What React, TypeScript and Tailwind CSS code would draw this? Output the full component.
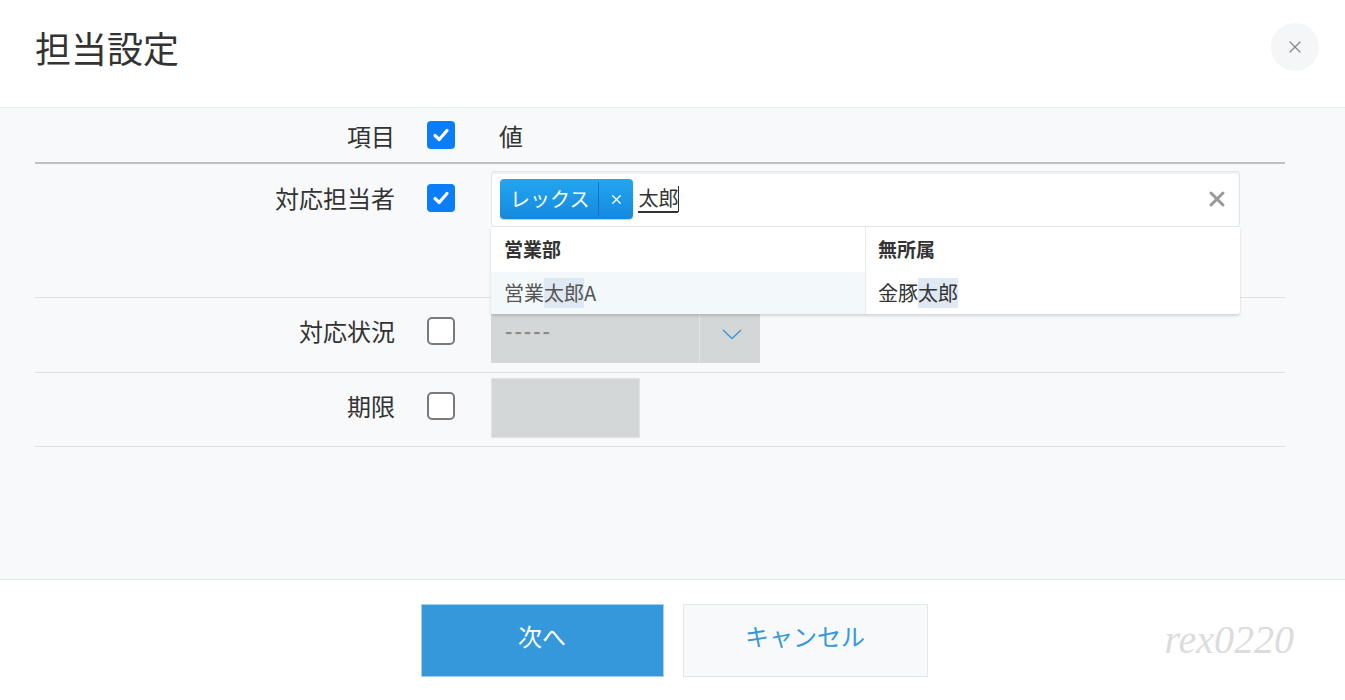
import { X } from "lucide-react";

const FONT = { fontFamily: '"Noto Sans CJK JP", "Noto Sans", sans-serif' };

function CheckBox({ checked }: { checked: boolean }) {
  if (checked) {
    return (
      <div className="flex h-[28px] w-[28px] items-center justify-center rounded-[4px] bg-[#0a7ef8]">
        <svg width="20" height="20" viewBox="0 0 20 20">
          <path d="M4 10.5 L8.2 14.5 L16 5.5" fill="none" stroke="#fff" strokeWidth="3.2" strokeLinecap="round" strokeLinejoin="round" />
        </svg>
      </div>
    );
  }
  return <div className="h-[28px] w-[28px] rounded-[5px] border-2 border-[#7a7a7a] bg-white" />;
}

function Hl({ children }: { children: string }) {
  return <span className="bg-[#dfe9f3]">{children}</span>;
}

export default function App() {
  return (
    <div className="flex h-[700px] w-[1345px] flex-col bg-white text-[#333]" style={FONT}>
      <div className="flex h-[108px] shrink-0 items-center justify-between border-b border-[#eceeef] pl-[35px] pr-[26px]">
        <h1 className="pb-[14px] text-[36px] font-normal leading-none text-[#333]">担当設定</h1>
        <button className="mb-[14px] flex h-[48px] w-[48px] items-center justify-center rounded-full bg-[#f5f6f7] text-[#888]">
          <X size={20} strokeWidth={1.5} />
        </button>
      </div>

      <div className="flex-1 bg-[#f7f9fa] pl-[35px] pr-[60px]">
        <div className="flex h-[56px] items-center border-b-2 border-[#c2c2c2]">
          <div className="w-[360px] pt-[2px] text-right text-[24px] leading-[30px]">項目</div>
          <div className="w-[96px] pl-[32px]">
            <CheckBox checked />
          </div>
          <div className="pl-[8px] pt-[2px] text-[24px] leading-[30px]">値</div>
        </div>

        <div className="flex h-[134px] items-start border-b border-[#e0e2e3]">
          <div className="mt-[19px] w-[360px] text-right text-[24px] leading-[30px]">対応担当者</div>
          <div className="mt-[20px] w-[96px] pl-[32px]">
            <CheckBox checked />
          </div>
          <div className="relative mt-[7px] w-[749px]">
            <div className="flex h-[56px] items-center rounded-[3px] border border-[#e3e6e8] bg-white pl-[8px] pr-[10px] shadow-[inset_0_2px_2px_rgba(0,0,0,0.06)]">
              <div className="flex h-[40px] items-center rounded-[4px] bg-gradient-to-b from-[#23a6ef] to-[#1589e0] text-white shadow-[0_1px_1px_rgba(0,0,0,0.2)]">
                <span className="pl-[10px] pr-[9px] text-[20px]">レックス</span>
                <span className="h-[34px] w-px bg-[#1274bf]" />
                <span className="flex w-[34px] justify-center">
                  <X size={15} strokeWidth={2} />
                </span>
              </div>
              <span className="ml-[5px] border-b-2 border-[#333] text-[20px] leading-[26px]">太郎</span>
              <span className="h-[26px] w-px bg-[#333]" />
              <span className="flex-1" />
              <X size={24} strokeWidth={3} className="text-[#9a9a9a]" />
            </div>

            <div className="absolute left-0 top-[56px] z-10 flex h-[87px] w-[749px] rounded-b-[3px] bg-white shadow-[0_2px_3px_rgba(0,0,0,0.15)]">
              <div className="flex w-[375px] flex-col border-r border-[#e8eaeb]">
                <div className="flex h-[45px] items-center pl-[13px] text-[19px] font-bold">営業部</div>
                <div className="flex h-[42px] items-center bg-[#f3f8fb] pl-[13px] text-[20px] text-[#555]">
                  営業<Hl>太郎</Hl>A
                </div>
              </div>
              <div className="flex flex-1 flex-col">
                <div className="flex h-[45px] items-center pl-[12px] text-[19px] font-bold">無所属</div>
                <div className="flex h-[42px] items-center pl-[12px] text-[20px]">
                  金豚<Hl>太郎</Hl>
                </div>
              </div>
            </div>
          </div>
        </div>

        <div className="flex h-[75px] items-start border-b border-[#e0e2e3]">
          <div className="mt-[18px] w-[360px] text-right text-[24px] leading-[30px]">対応状況</div>
          <div className="mt-[19px] w-[96px] pl-[32px]">
            <CheckBox checked={false} />
          </div>
          <div className="mt-[7px] flex h-[58px] w-[269px] items-center bg-[#d4d7d8]">
            <span className="flex-1 pb-[6px] pl-[14px] text-[20px] font-bold tracking-[2px] text-[#8a8a8a]">-----</span>
            <span className="h-full w-px bg-[#e2e4e5]" />
            <span className="flex w-[60px] justify-center pl-[4px]">
              <svg width="20" height="11" viewBox="0 0 20 11">
                <path d="M1 1 L10 9.5 L19 1" fill="none" stroke="#3498db" strokeWidth="1.4" />
              </svg>
            </span>
          </div>
        </div>

        <div className="flex h-[74px] items-start border-b border-[#e0e2e3]">
          <div className="mt-[18px] w-[360px] text-right text-[24px] leading-[30px]">期限</div>
          <div className="mt-[19px] w-[96px] pl-[32px]">
            <CheckBox checked={false} />
          </div>
          <div className="mt-[5px] h-[60px] w-[149px] border border-[#e0e2e3] bg-[#d4d7d8]" />
        </div>
      </div>

      <div className="relative flex h-[121px] shrink-0 items-center justify-center gap-[19px] border-t border-[#e3e6e8] pl-[3px]">
        <button className="h-[73px] w-[243px] border border-[#a8cdea] bg-[#3498db] pb-[8px] text-[24px] text-white">次へ</button>
        <button className="h-[73px] w-[245px] border border-[#e3e7e8] bg-[#f7f9fa] pb-[8px] text-[24px] text-[#3498db]">キャンセル</button>
        <span
          className="absolute right-[51px] top-[30px] text-[40px] italic text-[#dcdcdc]"
          style={{ fontFamily: '"Liberation Serif", serif' }}
        >
          rex0220
        </span>
      </div>
    </div>
  );
}
